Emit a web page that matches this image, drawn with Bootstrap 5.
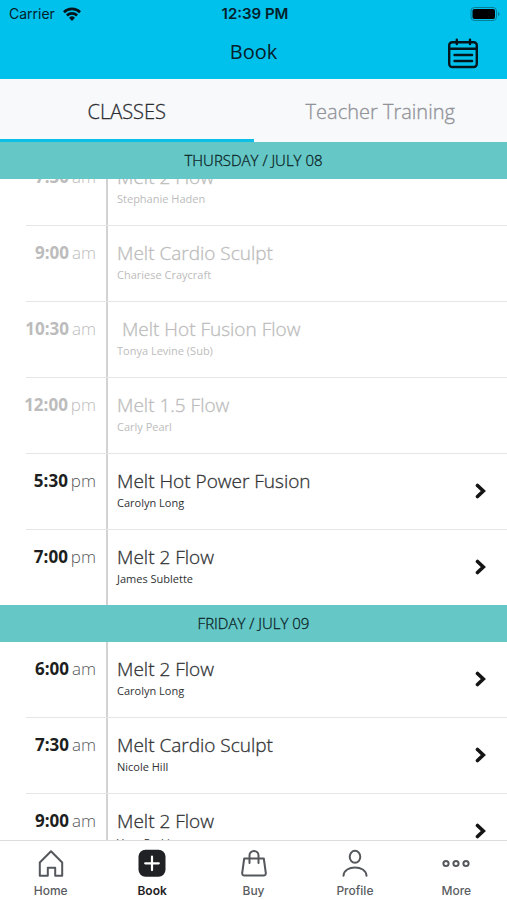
<!DOCTYPE html>
<html lang="en">
<head>
<meta charset="utf-8">
<meta name="viewport" content="width=device-width, initial-scale=1">
<title>Book</title>
<link href="https://cdn.jsdelivr.net/npm/bootstrap@5.3.0/dist/css/bootstrap.min.css" rel="stylesheet">
<style>
  body { font-family: "Open Sans", sans-serif; color: #222426; background: #fff; }
  a { color: inherit; text-decoration: none; }
  .app-top { background: #00c0ec; color: #04202a; }
  .status { font: 400 14px/28px Inter, sans-serif; padding: 0 6px 0 9px; }
  .status strong { font-weight: 600; font-size: 15px; }
  .title-bar { height: 51px; padding: 0 28px; }
  .title-bar h1 { font: 400 20px/48px "Open Sans", sans-serif; }
  .tabs { background: #f8f9fb; }
  .tabs .nav-link, .day, .info h2 { font-weight: 350; -webkit-text-stroke: 0.3px currentColor; }
  .tabs .nav-link { font-size: 20px; line-height: 60px; padding: 3px 0 0; height: 63px; color: #909298; }
  .tabs .nav-link.active { color: #2b2d31; box-shadow: inset 0 -3px #0bbfe6; }
  .schedule { overflow: hidden; min-height: 0; }
  .day { background: #65c8c6; font-size: 15px; line-height: 37px; color: #0c2426; position: relative; z-index: 1; }
  .scrolled { margin-top: -29px; }
  .slot { height: 76px; color: inherit; }
  .slot:last-child { height: 75px; }
  .slot::after { content: ""; position: absolute; left: 26px; right: 0; bottom: 0; height: 1px; background: #e6e6e6; }
  .slot:last-child::after { display: none; }
  .time { width: 108px; flex: none; display: flex; justify-content: flex-end; align-items: baseline; gap: 3px; padding: 13px 10px 0 0; border-right: 2px solid #d2d2d2; font-size: 17px; line-height: 28px; font-weight: 300; white-space: nowrap; color: #55575a; }
  .time b { font-weight: 700; color: #1c1e20; }
  .info { padding: 13px 0 0 9px; color: #303234; }
  .info h2 { font-size: 19px; line-height: 28px; margin: 0; white-space: pre; }
  .info p { font-size: 11px; line-height: 16px; margin: 0; }
  .past .time, .past .time b, .past .info { color: #bcbcbc; }
  .go { margin: 29px 20px 0 auto; }
  .tabbar { border-top: 1px solid #dcdcdc; height: 60px; background: #fff; font: 500 12px/16px Inter, sans-serif; color: #5a5d61; }
  .tabbar .nav-link { color: inherit; padding: 8px 0 0; }
  .tabbar .nav-link.active { color: #1f2124; font-weight: 600; }
  .tabbar svg { display: block; margin: 0 auto 6px; }
</style>
<script src="https://cdn.jsdelivr.net/npm/bootstrap@5.3.0/dist/js/bootstrap.bundle.min.js"></script>
</head>
<body>
<svg class="d-none" aria-hidden="true">
  <symbol id="chev" viewBox="0 0 12 16"><path d="M2.500 2.500 8.300 8l-5.800 5.500" fill="none" stroke="#141414" stroke-width="3.600" stroke-linecap="round"/></symbol>
</svg>
<div class="vh-100 d-flex flex-column">
  <header class="app-top">
    <div class="status row g-0">
      <div class="col d-flex align-items-center gap-2"><span>Carrier</span>
        <svg width="18" height="14" viewBox="0 0 18 14" aria-hidden="true"><g fill="none" stroke="#04161c" stroke-width="2.700"><path d="M.9 5.200a11.500 11.500 0 0 1 16.200 0"/><path d="M3.900 8.500a7.300 7.300 0 0 1 10.200 0"/></g><path d="M6 10.800a4.300 4.300 0 0 1 6 0L9 13.900z" fill="#04161c"/></svg>
      </div>
      <strong class="col-auto">12:39 PM</strong>
      <div class="col d-flex align-items-center justify-content-end">
        <svg width="31" height="14" viewBox="0 0 31 14" aria-hidden="true"><rect x="1" y=".5" width="25.500" height="13" rx="3.500" fill="none" stroke="#087d98"/><rect x="2.500" y="2" width="22.500" height="10" rx="2" fill="#000"/><path d="M28 5v4q1.600-.5 1.600-2T28 5" fill="#087d98"/></svg>
      </div>
    </div>
    <div class="title-bar row g-0">
      <div class="col"></div>
      <h1 class="col-auto m-0">Book</h1>
      <div class="col d-flex justify-content-end align-items-center">
        <button type="button" class="btn p-0 border-0 lh-1" aria-label="Calendar">
          <svg width="32" height="32" viewBox="0 0 32 32" fill="none" stroke="#04161c" stroke-width="2.400" stroke-linecap="round"><rect x="2.200" y="4.200" width="27.600" height="24.800" rx="3"/><path d="M2.500 10.700h27M9.800 1.600V6M23 1.600V6M7.500 17h17.600M7.500 23h17.600"/></svg>
        </button>
      </div>
    </div>
  </header>
  <nav class="tabs nav nav-justified">
    <a class="nav-link active" href="#classes" aria-current="page">CLASSES</a>
    <a class="nav-link" href="#training">Teacher Training</a>
  </nav>
  <main class="schedule flex-grow-1">
    <div class="day text-center">THURSDAY / JULY 08</div>
    <div class="scrolled">
      <div class="slot past d-flex position-relative"><div class="time"><b>7:30</b> am</div><div class="info"><h2>Melt 2 Flow</h2><p>Stephanie Haden</p></div></div>
      <div class="slot past d-flex position-relative"><div class="time"><b>9:00</b> am</div><div class="info"><h2>Melt Cardio Sculpt</h2><p>Chariese Craycraft</p></div></div>
      <div class="slot past d-flex position-relative"><div class="time"><b>10:30</b> am</div><div class="info"><h2> Melt Hot Fusion Flow</h2><p>Tonya Levine (Sub)</p></div></div>
      <div class="slot past d-flex position-relative"><div class="time"><b>12:00</b> pm</div><div class="info"><h2>Melt 1.5 Flow</h2><p>Carly Pearl</p></div></div>
      <a href="#c1" class="slot d-flex position-relative"><div class="time"><b>5:30</b> pm</div><div class="info"><h2>Melt Hot Power Fusion</h2><p>Carolyn Long</p></div><svg class="go" width="12" height="16"><use href="#chev"/></svg></a>
      <a href="#c2" class="slot d-flex position-relative"><div class="time"><b>7:00</b> pm</div><div class="info"><h2>Melt 2 Flow</h2><p>James Sublette</p></div><svg class="go" width="12" height="16"><use href="#chev"/></svg></a>
    </div>
    <div class="day text-center">FRIDAY / JULY 09</div>
    <div>
      <a href="#c3" class="slot d-flex position-relative"><div class="time"><b>6:00</b> am</div><div class="info"><h2>Melt 2 Flow</h2><p>Carolyn Long</p></div><svg class="go" width="12" height="16"><use href="#chev"/></svg></a>
      <a href="#c4" class="slot d-flex position-relative"><div class="time"><b>7:30</b> am</div><div class="info"><h2>Melt Cardio Sculpt</h2><p>Nicole Hill</p></div><svg class="go" width="12" height="16"><use href="#chev"/></svg></a>
      <a href="#c5" class="slot d-flex position-relative"><div class="time"><b>9:00</b> am</div><div class="info"><h2>Melt 2 Flow</h2><p>Vern Perkins</p></div><svg class="go" width="12" height="16"><use href="#chev"/></svg></a>
    </div>
  </main>
  <nav class="tabbar nav nav-justified flex-nowrap flex-shrink-0">
    <a class="nav-link" href="#home"><svg width="28" height="28" viewBox="0 0 28 28" fill="none" stroke="#54575b" stroke-width="2"><path d="M2.800 13.500 14 2.300l11.200 11.200v13.300h-7v-8h-7.400v8h-8z" stroke-linejoin="round"/></svg>Home</a>
    <a class="nav-link active" href="#book"><svg width="28" height="28" viewBox="0 0 28 28"><rect x=".5" y=".8" width="27" height="27" rx="7" fill="#1f2124"/><path d="M14 7.500v13.600M7.200 14.300h13.600" stroke="#fff" stroke-width="2.200" stroke-linecap="round"/></svg>Book</a>
    <a class="nav-link" href="#buy"><svg width="28" height="28" viewBox="0 0 28 28" fill="none" stroke="#54575b" stroke-width="2" stroke-linecap="round" stroke-linejoin="round"><path d="M4.200 9.500h19.600l2 14.500q.2 2.500-2.300 2.500h-19q-2.500 0-2.300-2.500zM9.500 14V6.500a4.500 4.500 0 0 1 9 0V14"/></svg>Buy</a>
    <a class="nav-link" href="#profile"><svg width="28" height="28" viewBox="0 0 28 28" fill="none" stroke="#54575b" stroke-width="2" stroke-linecap="round"><ellipse cx="14" cy="7.800" rx="5.300" ry="6"/><path d="M2.500 26.800c.5-11.200 22.500-11.200 23 0"/></svg>Profile</a>
    <a class="nav-link" href="#more"><svg width="28" height="28" viewBox="0 0 28 28" fill="none" stroke="#54575b" stroke-width="2"><circle cx="4" cy="14.500" r="2.600"/><circle cx="14" cy="14.500" r="2.600"/><circle cx="24" cy="14.500" r="2.600"/></svg>More</a>
  </nav>
</div>
</body>
</html>
